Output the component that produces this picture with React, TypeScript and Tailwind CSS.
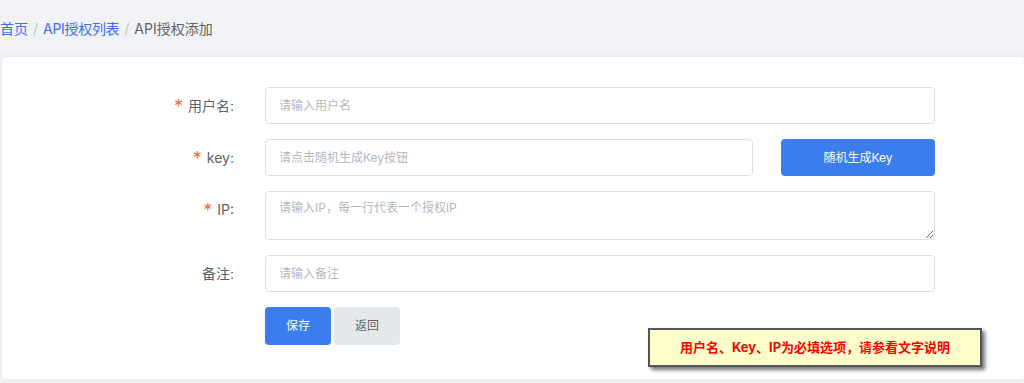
import React from "react";

const font = "font-['Inter','Noto_Sans_CJK_SC',sans-serif]";

const Label: React.FC<{ text: string; required?: boolean }> = ({ text, required }) => (
  <div className="flex h-[37px] w-[232px] shrink-0 items-center justify-end text-[14px] leading-none text-[#606266]">
    {required && <span className="mr-[5px] mt-[2px] text-[18px] leading-none text-[#e8733f]">*</span>}
    <span>{text}:</span>
  </div>
);

const inputCls =
  "h-[37px] rounded-[4px] border border-[#dcdfe6] bg-white px-[13px] text-[12px] text-[#606266] outline-none placeholder:text-[#b4b8bf]";

export default function App() {
  return (
    <div className={`relative h-[383px] overflow-hidden bg-[#f0f2f5] ${font}`}>
      {/* breadcrumb */}
      <div className="flex h-[57px] items-center text-[14px]">
        <span className="text-[#3c6ff3]">首页</span>
        <span className="mx-[5px] text-[#c0c4cc]">/</span>
        <span className="tracking-[-0.3px] text-[#3c6ff3]">API授权列表</span>
        <span className="mx-[5px] text-[#c0c4cc]">/</span>
        <span className="text-[#606266]">API授权添加</span>
      </div>

      <div className="relative ml-[2px] rounded-[4px] bg-white pt-[30px] pb-[34px] shadow-[0_-1px_6px_rgba(0,0,0,0.05)]">
        <div className="flex flex-col gap-[15px]">
          <div className="flex h-[37px] items-start">
            <Label text="用户名" required />
            <input className={`ml-[31px] w-[670px] ${inputCls}`} placeholder="请输入用户名" />
          </div>
          <div className="flex h-[37px] items-start">
            <Label text="key" required />
            <input className={`ml-[31px] w-[488px] ${inputCls}`} placeholder="请点击随机生成Key按钮" />
            <button className="ml-[28px] h-[37px] w-[154px] rounded-[4px] bg-[#3b7ded] text-[12px] text-white">
              随机生成Key
            </button>
          </div>
          <div className="flex h-[49px] items-start">
            <Label text="IP" required />
            <textarea
              className="ml-[31px] h-[49px] w-[670px] rounded-[4px] border border-[#dcdfe6] bg-white px-[13px] py-[6px] text-[12px] leading-[20px] text-[#606266] outline-none placeholder:text-[#b4b8bf]"
              placeholder="请输入IP，每一行代表一个授权IP"
            />
          </div>
          <div className="flex h-[37px] items-start">
            <Label text="备注" />
            <input className={`ml-[31px] w-[670px] ${inputCls}`} placeholder="请输入备注" />
          </div>
          <div className="flex h-[38px] items-start">
            <div className="w-[232px] shrink-0" />
            <button className="ml-[31px] h-[38px] w-[66px] rounded-[4px] bg-[#3b7ded] text-[12px] text-white">
              保存
            </button>
            <button className="ml-[3px] h-[38px] w-[66px] rounded-[4px] bg-[#e4e8eb] text-[12px] text-[#606266]">
              返回
            </button>
          </div>
        </div>

        {/* floating notice */}
        <div className="absolute left-[646px] top-[271px] flex h-[39px] w-[334px] items-center justify-center border-2 border-[#555555] bg-[#ffffcc] shadow-[3px_3px_4px_rgba(0,0,0,0.55)]">
          <span className="text-[13px] font-bold text-[#ff0000]">
            用户名、Key、IP为必填选项，请参看文字说明
          </span>
        </div>
      </div>
    </div>
  );
}
